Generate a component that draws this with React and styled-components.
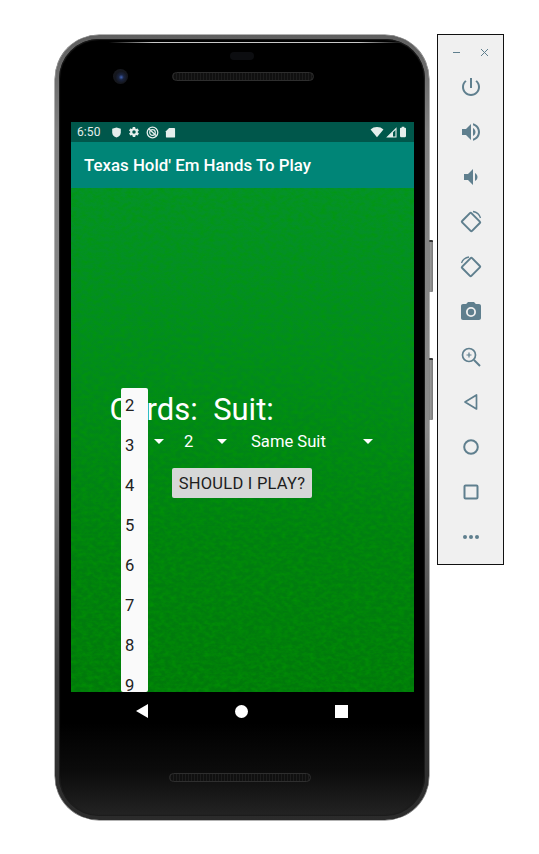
import React from "react";
import styled, { createGlobalStyle } from "styled-components";

const GlobalStyle = createGlobalStyle`
  html, body {
    margin: 0;
    padding: 0;
    background: #fff;
    font-family: Roboto, "Liberation Sans", sans-serif;
  }
`;

const Stage = styled.div`
  display: flex;
  align-items: flex-start;
  gap: 4px;
  width: 539px;
  height: 854px;
  padding: 34px 0 0 55px;
  box-sizing: border-box;
  overflow: hidden;
`;

/* phone */
const PhoneWrap = styled.div`
  display: flex;
  align-items: flex-start;
  margin-top: 1px;
`;

const Phone = styled.div`
  position: relative;
  width: 374px;
  height: 785px;
  box-sizing: border-box;
  padding: 0 11px 0 12px;
  border: 4px solid transparent;
  border-radius: 44px;
  background:
    linear-gradient(180deg, #000 0, #000 88%, #0b0b0b 94%, #232323 100%) padding-box,
    linear-gradient(180deg, #5f5f5f 0, #808080 12%, #8a8a8a 50%, #3a3a3a 82%, #2b2b2b 100%) border-box;
  box-shadow: 0 0 0 0.5px #666, inset 0 0 1px 1px #1c1c1c;
  display: flex;
  flex-direction: column;

  /* thin glass highlight along the top */
  &::before {
    content: "";
    position: absolute;
    top: 3px;
    left: 50px;
    right: 22px;
    height: 1px;
    background: linear-gradient(90deg, transparent, #c8c8c8 15%, #c8c8c8 85%, transparent);
  }
`;

const SideKeys = styled.div`
  display: flex;
  flex-direction: column;
  gap: 66px;
  padding-top: 205px;
`;

const SideKey = styled.div`
  width: 4px;
  height: ${(p) => p.$h}px;
  background: linear-gradient(90deg, #a8a8a8, #777);
  border-top: 2px solid #333;
  border-radius: 0 1px 1px 0;
`;

const TopBezel = styled.div`
  height: 83px;
  flex: none;
  display: flex;
  flex-direction: column;
  padding-top: 13px;
  box-sizing: border-box;
`;

const Earpiece = styled.div`
  width: 24px;
  height: 8px;
  margin-left: 159px;
  border-radius: 4px;
  background: #0c0d10;
`;

const SensorRow = styled.div`
  display: flex;
  align-items: center;
  margin-top: 9px;
  padding-left: 42px;
  gap: 44px;
`;

const Camera = styled.div`
  width: 15px;
  height: 15px;
  border-radius: 50%;
  background: radial-gradient(circle at 55% 55%, #3f5fb0 0, #1a2440 22%, #14161d 50%, #1b1c20 100%);
`;

const Speaker = styled.div`
  width: 142px;
  height: 9px;
  box-sizing: border-box;
  border: 1px solid #2e2e2e;
  border-radius: 5px;
  background: repeating-linear-gradient(90deg, #1d1d1d 0, #1d1d1d 1px, #101010 1px, #101010 3px);
`;

const Screen = styled.div`
  height: 570px;
  flex: none;
  display: flex;
  flex-direction: column;
  overflow: hidden;
`;

const StatusBar = styled.div`
  height: 20px;
  flex: none;
  background: #00574b;
  display: flex;
  align-items: center;
  padding: 0 8px 0 6px;
  color: #e4eeec;
  font-size: 12px;
  letter-spacing: 0.1px;
`;

const Clock = styled.span`
  width: 30px;
  margin-right: 4px;
`;

const StatusIcons = styled.div`
  display: flex;
  align-items: center;
  gap: 6px;
`;

const StatusRight = styled.div`
  margin-left: auto;
  display: flex;
  align-items: center;
  gap: 2px;
`;

const BatterySlot = styled.span`
  display: flex;
  margin-left: 1px;
`;

const AppBar = styled.div`
  height: 46px;
  flex: none;
  background: #008577;
  color: #fff;
  font-size: 16.85px;
  font-weight: 500;
  line-height: 46px;
  padding-left: 13px;
`;

const Felt = styled.div`
  position: relative;
  flex: 1;
  background: linear-gradient(180deg, #04922a 0, #018b1e 35%, #007f10 70%, #00790a 100%);
  overflow: hidden;
`;

const FeltTexture = styled.svg`
  position: absolute;
  inset: 0;
  width: 100%;
  height: 100%;
`;

const Form = styled.div`
  position: relative;
  display: flex;
  flex-direction: column;
  padding-top: 201px;
  color: #fff;
`;

const Labels = styled.div`
  font-size: 31px;
  line-height: 42px;
  padding-left: 38.5px;
  white-space: pre;
`;

const PickerRow = styled.div`
  display: flex;
  height: 28px;
  align-items: center;
  margin-top: -4px;
  padding-left: 73px;
  font-size: 16.6px;
`;

const Picker = styled.div`
  width: ${(p) => p.$w}px;
  flex: none;
  display: flex;
  align-items: center;
  justify-content: space-between;
  box-sizing: border-box;
  padding: ${(p) => p.$pad};
`;

const Caret = styled.span`
  width: 0;
  height: 0;
  border-left: 5px solid transparent;
  border-right: 5px solid transparent;
  border-top: 5px solid #fff;
`;

const PlayButton = styled.button`
  align-self: flex-start;
  margin: 13px 0 0 101px;
  width: 140px;
  height: 30px;
  padding: 0;
  border: 0;
  border-radius: 2px;
  background: #d6d7d7;
  color: #1d1d1d;
  font: 400 16.5px Roboto, sans-serif;
  letter-spacing: 0.25px;
`;

/* open spinner list, lies over the form */
const Dropdown = styled.div`
  position: absolute;
  left: 50px;
  top: 200px;
  bottom: 0;
  width: 27px;
  background: #fafafa;
  border-radius: 2px;
  overflow: hidden;
  color: #222;
  font-size: 16.6px;
`;

const DropdownItem = styled.div`
  height: 40px;
  line-height: 36px;
  padding-left: 4px;
`;

const NavBar = styled.div`
  height: 38px;
  flex: none;
  display: flex;
  align-items: center;
  padding-left: 65px;
  gap: 87px;
`;

const NavBack = styled.span`
  width: 0;
  height: 0;
  border-top: 7px solid transparent;
  border-bottom: 7px solid transparent;
  border-right: 12px solid #fff;
`;

const NavHome = styled.span`
  width: 13px;
  height: 13px;
  border-radius: 50%;
  background: #fff;
`;

const NavRecent = styled.span`
  width: 13px;
  height: 13px;
  background: #fff;
`;

const BottomBezel = styled.div`
  padding: 43px 0 0 98px;
`;

/* emulator toolbar */
const Toolbar = styled.div`
  width: 67px;
  height: 531px;
  box-sizing: border-box;
  border: 1px solid #111;
  background: #f0f0f0;
  display: flex;
  flex-direction: column;
  align-items: center;
  color: #5f7f8e;
`;

const WindowControls = styled.div`
  display: flex;
  gap: 19px;
  align-items: center;
  height: 14px;
  margin: 10px 0 5px;
`;

const ToolButton = styled.div`
  height: 45px;
  width: 100%;
  flex: none;
  display: flex;
  align-items: center;
  justify-content: center;
`;

const MoreDots = styled.div`
  display: flex;
  gap: 2px;
`;

const Dot = styled.span`
  width: 4px;
  height: 4px;
  border-radius: 50%;
  background: #5f7f8e;
`;

const Icon = ({ size = 24, w, children, vb = "0 0 24 24" }) => (
  <svg width={w || size} height={size} viewBox={vb} fill="currentColor">
    {children}
  </svg>
);

const line = { fill: "none", stroke: "currentColor", strokeWidth: 2 };

const ranks = ["2", "3", "4", "5", "6", "7", "8", "9"];

export default function App() {
  return (
    <Stage>
      <GlobalStyle />
      <PhoneWrap>
        <Phone>
          <TopBezel>
            <Earpiece />
            <SensorRow>
              <Camera />
              <Speaker />
            </SensorRow>
          </TopBezel>
          <Screen>
            <StatusBar>
              <Clock>6:50</Clock>
              <StatusIcons>
                <Icon size={11} vb="0 0 12 12">
                  <path d="M6 .5 10.7 2v3.6c0 3-2 5-4.700 5.900C3.300 10.600 1.300 8.600 1.300 5.600V2z" />
                </Icon>
                <Icon size={12}>
                  <path d="M19.400 13c.1-.3.1-.7.1-1s0-.7-.1-1l2.100-1.600c.2-.2.200-.4.100-.6l-2-3.500c-.1-.2-.4-.3-.6-.2l-2.500 1c-.5-.4-1.100-.7-1.700-1l-.4-2.600c0-.3-.2-.5-.5-.5h-4c-.2 0-.5.2-.5.500l-.4 2.600c-.6.300-1.200.6-1.700 1l-2.500-1c-.2-.1-.5 0-.6.200l-2 3.500c-.1.200-.1.500.1.600L4.500 11c0 .3-.1.700-.1 1s0 .7.100 1l-2.100 1.600c-.2.200-.2.400-.1.600l2 3.500c.1.200.4.300.6.200l2.500-1c.5.400 1.100.700 1.700 1l.4 2.600c0 .3.300.500.500.500h4c.3 0 .5-.2.500-.5l.4-2.600c.6-.3 1.200-.6 1.700-1l2.500 1c.2.100.5 0 .6-.2l2-3.500c.1-.2.100-.4-.1-.6zM12 15.500a3.500 3.500 0 1 1 0-7 3.500 3.500 0 0 1 0 7z" />
                </Icon>
                <Icon size={13} vb="0 0 13 13">
                  <circle cx="6.500" cy="6.500" r="5.300" fill="none" stroke="currentColor" strokeWidth="1.300" />
                  <circle cx="6.500" cy="6.500" r="2.800" fill="none" stroke="currentColor" strokeWidth="1.200" />
                  <path d="M3 3 10 9.500" stroke="currentColor" strokeWidth="1.400" />
                </Icon>
                <Icon size={11} vb="0 0 11 12">
                  <path d="M4 1h5.500c.6 0 1 .4 1 1v8.500c0 .6-.4 1-1 1h-8c-.6 0-1-.4-1-1V4.500z" />
                </Icon>
              </StatusIcons>
              <StatusRight>
                <Icon size={12} w={14} vb="0 0 13 11">
                  <path d="M.5 3.200C2.200 1.500 4.200.8 6.500.8s4.300.7 6 2.400L6.500 10.300z" />
                </Icon>
                <Icon size={11} vb="0 0 11 11">
                  <path d="M10 1.500V10H1.500z" fill="none" stroke="currentColor" strokeWidth="1.100" />
                  <path d="M7 4.700V10H1.500z" />
                </Icon>
                <BatterySlot>
                  <Icon size={12} w={6} vb="0 0 7 12">
                    <path d="M2 0h3v1h1c.5 0 1 .4 1 1v9c0 .6-.5 1-1 1H1c-.5 0-1-.4-1-1V2c0-.6.500-1 1-1h1z" />
                  </Icon>
                </BatterySlot>
              </StatusRight>
            </StatusBar>
            <AppBar>Texas Hold' Em Hands To Play</AppBar>
            <Felt>
              <FeltTexture aria-hidden="true">
                <filter id="felt" x="0" y="0" width="100%" height="100%">
                  <feTurbulence type="fractalNoise" baseFrequency="0.18 0.26" numOctaves="3" seed="7" />
                  <feColorMatrix values="0 0 0 0 0  0 0 0 0 0.32  0 0 0 0 0  1.2 0 0 0 -0.42" />
                </filter>
                <rect width="100%" height="100%" filter="url(#felt)" />
              </FeltTexture>
              <Form>
                <Labels>{"Cards:  Suit:"}</Labels>
                <PickerRow>
                  <Picker $w={32} $pad="0 12px 0 0">
                    <span />
                    <Caret />
                  </Picker>
                  <Picker $w={67} $pad="0 16px 0 8px">
                    <span>2</span>
                    <Caret />
                  </Picker>
                  <Picker $w={130} $pad="0 0 0 8px">
                    <span>Same Suit</span>
                    <Caret />
                  </Picker>
                </PickerRow>
                <PlayButton>SHOULD I PLAY?</PlayButton>
              </Form>
              <Dropdown>
                {ranks.map((r) => (
                  <DropdownItem key={r}>{r}</DropdownItem>
                ))}
              </Dropdown>
            </Felt>
          </Screen>
          <NavBar>
            <NavBack />
            <NavHome />
            <NavRecent />
          </NavBar>
          <BottomBezel>
            <Speaker />
          </BottomBezel>
        </Phone>
        <SideKeys>
          <SideKey $h={50} />
          <SideKey $h={60} />
        </SideKeys>
      </PhoneWrap>
      <Toolbar>
        <WindowControls>
          <Icon size={9} vb="0 0 9 9">
            <path d="M1 4.500h7" {...line} strokeWidth="1" />
          </Icon>
          <Icon size={9} vb="0 0 9 9">
            <path d="M1 1l7 7M8 1 1 8" {...line} strokeWidth="1" />
          </Icon>
        </WindowControls>
        <ToolButton>
          <Icon>
            <path d="M13 3h-2v10h2V3zm4.830 2.170-1.420 1.420C17.990 7.860 19 9.810 19 12c0 3.870-3.130 7-7 7s-7-3.130-7-7c0-2.190 1.010-4.140 2.580-5.420L6.170 5.170C4.230 6.820 3 9.260 3 12c0 4.970 4.030 9 9 9s9-4.030 9-9c0-2.740-1.230-5.180-3.170-6.830z" />
          </Icon>
        </ToolButton>
        <ToolButton>
          <Icon>
            <path d="M3 9v6h4l5 5V4L7 9H3zm13.500 3c0-1.770-1.020-3.290-2.500-4.030v8.050c1.480-.73 2.500-2.250 2.500-4.020zM14 3.230v2.060c2.890.86 5 3.540 5 6.710s-2.110 5.850-5 6.710v2.060c4.010-.91 7-4.490 7-8.770s-2.990-7.860-7-8.770z" />
          </Icon>
        </ToolButton>
        <ToolButton>
          <Icon>
            <path d="M18.500 12c0-1.770-1.020-3.290-2.500-4.030v8.050c1.480-.73 2.500-2.250 2.500-4.020zM5 9v6h4l5 5V4L9 9H5z" />
          </Icon>
        </ToolButton>
        <ToolButton>
          <Icon>
            <rect x="5" y="5.500" width="14" height="13" rx="1" transform="rotate(45 12 12)" {...line} />
            <path d="M14 1.500c3.500.6 6.500 3 7.500 6.500" fill="none" stroke="currentColor" strokeWidth="1.300" />
          </Icon>
        </ToolButton>
        <ToolButton>
          <Icon>
            <rect x="5" y="5.500" width="14" height="13" rx="1" transform="rotate(-45 12 12)" {...line} />
            <path d="M2.500 8C3.500 5 6.500 2.600 10 2" fill="none" stroke="currentColor" strokeWidth="1.300" />
          </Icon>
        </ToolButton>
        <ToolButton>
          <Icon>
            <path fillRule="evenodd" d="M9 2 7.170 4H4c-1.100 0-2 .9-2 2v12c0 1.100.9 2 2 2h16c1.100 0 2-.9 2-2V6c0-1.100-.9-2-2-2h-3.170L15 2H9zm3 15a5 5 0 1 1 0-10 5 5 0 0 1 0 10zm0-1.800a3.200 3.200 0 1 0 0-6.400 3.200 3.200 0 0 0 0 6.400z" />
          </Icon>
        </ToolButton>
        <ToolButton>
          <Icon>
            <circle cx="10" cy="10" r="6.500" {...line} strokeWidth="1.700" />
            <path d="m15 15 6 6" {...line} />
            <path d="M7.500 10h5M10 7.500v5" fill="none" stroke="currentColor" strokeWidth="1.200" />
          </Icon>
        </ToolButton>
        <ToolButton>
          <Icon>
            <path d="M17.500 5v14L6 12z" {...line} strokeLinejoin="round" strokeWidth="1.700" />
          </Icon>
        </ToolButton>
        <ToolButton>
          <Icon>
            <circle cx="12" cy="12" r="6.800" {...line} />
          </Icon>
        </ToolButton>
        <ToolButton>
          <Icon>
            <rect x="5.500" y="5.500" width="13" height="13" rx="1" {...line} />
          </Icon>
        </ToolButton>
        <ToolButton>
          <MoreDots>
            <Dot />
            <Dot />
            <Dot />
          </MoreDots>
        </ToolButton>
      </Toolbar>
    </Stage>
  );
}
